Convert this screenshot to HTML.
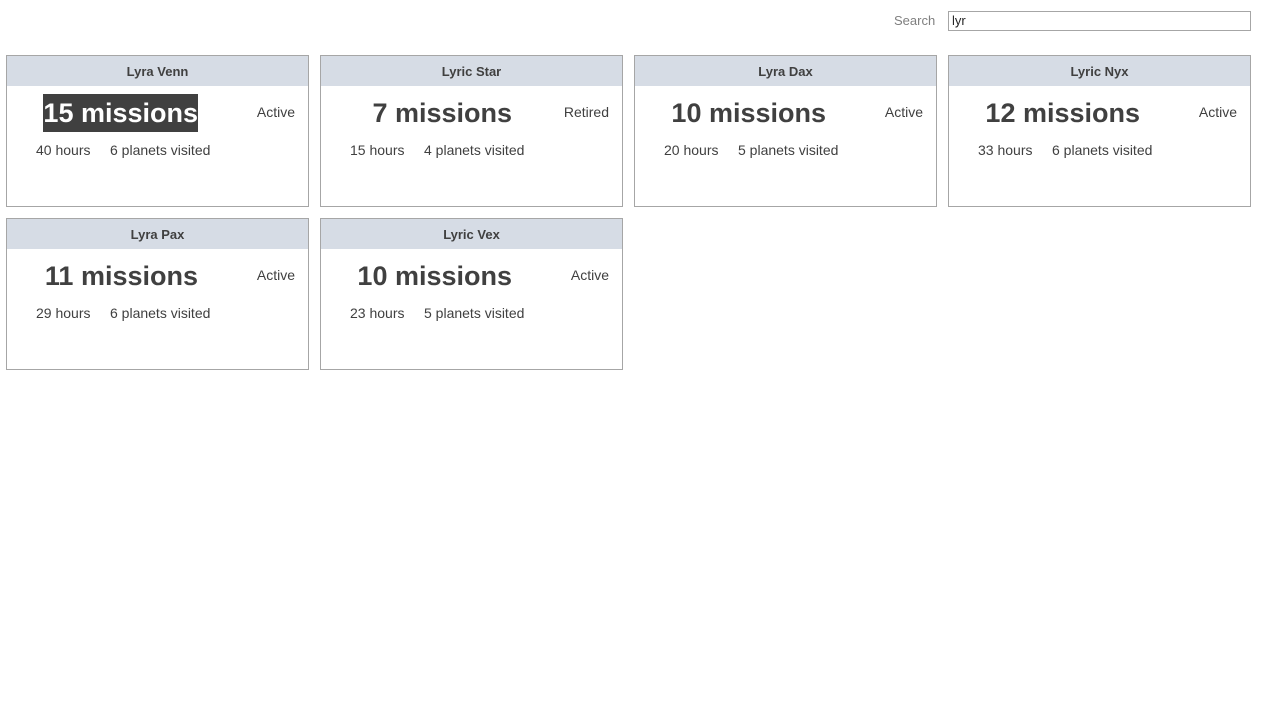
<!DOCTYPE html>
<html><head><meta charset="utf-8"><style>
body{margin:0;width:1263px;height:713px;background:#fff;font-family:"Liberation Sans",sans-serif;color:#404040;position:relative;overflow:hidden}
.s{position:absolute;left:894px;top:13px;font-size:13px;color:#7f7f7f}
.in{position:absolute;left:948px;top:11px;border:1px solid #a6a6a6;font-size:13px;line-height:18px;padding-left:3px;box-sizing:border-box;width:303px;height:20px;color:#262626}
.c{position:absolute;width:303px;height:152px;border:1px solid #a6a6a6;box-sizing:border-box}
.h{height:30px;background:#d6dce5;text-align:center;font-weight:bold;font-size:13px;line-height:32px;color:#404040}
.m{position:absolute;left:0;width:191px;top:38px;height:38px;text-align:right;font-weight:bold;font-size:27px;line-height:39px;color:#404040;white-space:nowrap}
.hl span{background:#404040;color:#fff;display:inline-block;line-height:38px}
.st{position:absolute;right:13px;top:48px;font-size:14px}
.hr{position:absolute;left:29px;top:86px;font-size:14px}
.pl{position:absolute;left:103px;top:86px;font-size:14px}
</style></head><body>
<div class="s">Search</div><div class="in">lyr</div>

<div class="c" style="left:6px;top:55px"><div class="h">Lyra Venn</div><div class="m hl"><span>15 missions</span></div><div class="st">Active</div><div class="hr">40 hours</div><div class="pl">6 planets visited</div></div>
<div class="c" style="left:320px;top:55px"><div class="h">Lyric Star</div><div class="m"><span>7 missions</span></div><div class="st">Retired</div><div class="hr">15 hours</div><div class="pl">4 planets visited</div></div>
<div class="c" style="left:634px;top:55px"><div class="h">Lyra Dax</div><div class="m"><span>10 missions</span></div><div class="st">Active</div><div class="hr">20 hours</div><div class="pl">5 planets visited</div></div>
<div class="c" style="left:948px;top:55px"><div class="h">Lyric Nyx</div><div class="m"><span>12 missions</span></div><div class="st">Active</div><div class="hr">33 hours</div><div class="pl">6 planets visited</div></div>
<div class="c" style="left:6px;top:218px"><div class="h">Lyra Pax</div><div class="m"><span>11 missions</span></div><div class="st">Active</div><div class="hr">29 hours</div><div class="pl">6 planets visited</div></div>
<div class="c" style="left:320px;top:218px"><div class="h">Lyric Vex</div><div class="m"><span>10 missions</span></div><div class="st">Active</div><div class="hr">23 hours</div><div class="pl">5 planets visited</div></div>
</body></html>
